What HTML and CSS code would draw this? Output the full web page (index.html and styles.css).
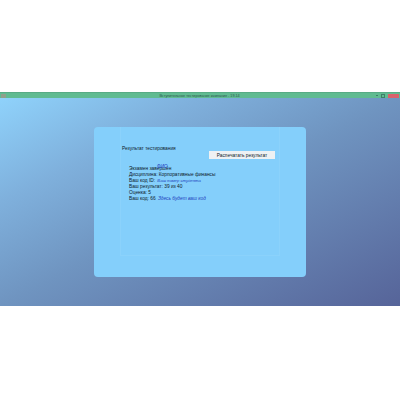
FILE: index.html
```html
<!DOCTYPE html>
<html>
<head>
    <title>Результат тестирования</title>
    <link rel="stylesheet" href="styles.css">
</head>
<body>

<div class="window">
    <div class="titlebar">
        <div class="side">
            <svg class="app-icon" width="5" height="4" viewBox="0 0 5 4"><rect width="5" height="4" fill="#8fa08c"/></svg>
        </div>
        <div class="title">Вступительное тестирование кампания - 19.14</div>
        <div class="side controls">
            <span class="min"></span>
            <span class="max"></span>
            <span class="close"></span>
        </div>
    </div>
    <div class="desktop">
        <div class="panel">
            <div class="frame">
                <div class="head">
                    <div class="heading">Результат тестирования</div>
                    <button class="print">Распечатать результат</button>
                </div>
                <div class="rows">
                    <div class="row exam">Экзамен завершён<span class="fio">ФИО</span></div>
                    <div class="row">Дисциплина: Корпоративные финансы</div>
                    <div class="row">Ваш код ID: <i class="small">Ваш номер студента</i></div>
                    <div class="row">Ваш результат: 39 из 40</div>
                    <div class="row">Оценка: 5</div>
                    <div class="row">Ваш код: 66 <i>Здесь будет ваш код</i></div>
                </div>
            </div>
        </div>
    </div>
</div>

</body>
</html>
```
FILE: styles.css
```css
body {
    margin: 0;
    height: 400px;
    background-color: #fff;
    font-family: "Liberation Sans", Arial, sans-serif;
}
.window {
    padding-top: 92px;
}
.titlebar {
    display: flex;
    align-items: center;
    justify-content: space-between;
    height: 5px;
    background-color: #60bb91;
    border-top: 1px solid #58ab85;
}
.side {
    width: 40px;
    display: flex;
}
.app-icon {
    margin-left: 1px;
}
.title {
    font-size: 3.7px;
    color: #2f5a50;
}
.controls {
    align-items: center;
    justify-content: flex-end;
    gap: 3px;
    margin-right: 1px;
}
.min {
    width: 2px;
    height: 1px;
    background-color: #3f7f68;
}
.max {
    width: 2px;
    height: 2px;
    border: 1px solid #3f7f68;
}
.close {
    width: 11px;
    height: 4px;
    background-color: #d9626c;
}
.desktop {
    height: 208px;
    padding: 29px 94px 0;
    box-sizing: border-box;
    background: linear-gradient(to bottom right, #8fd2fb 0%, #7fb0dc 25%, #6f94c0 50%, #566499 100%);
}
.panel {
    width: 212px;
    height: 150px;
    padding: 0 26px 21px;
    box-sizing: border-box;
    border-radius: 4px;
    background-color: #84cffb;
}
.frame {
    height: 129px;
    box-sizing: border-box;
    padding-top: 19px;
    border: 1px solid #8bd2fb;
    border-top: 0;
    font-size: 4.8px;
    color: #0e1a2a;
}
.head {
    display: flex;
    justify-content: space-between;
    padding-right: 4px;
    padding-left: 1px;
}
.heading {
    line-height: 6px;
}
.print {
    width: 66px;
    height: 8px;
    margin-top: 5px;
    padding: 0;
    border: 0;
    background-color: #eef1f3;
    font-family: inherit;
    font-size: 4.8px;
    color: #0e1a2a;
}
.rows {
    margin-top: 7px;
    padding-left: 8px;
}
.row {
    height: 6px;
    line-height: 6px;
    white-space: nowrap;
}
.row i {
    margin-left: 1px;
    color: #1f3fc0;
}
.row .small {
    font-size: 4.2px;
}
.exam {
    position: relative;
}
.fio {
    position: absolute;
    left: 28px;
    top: -2px;
    color: #1f3fc0;
}
```
